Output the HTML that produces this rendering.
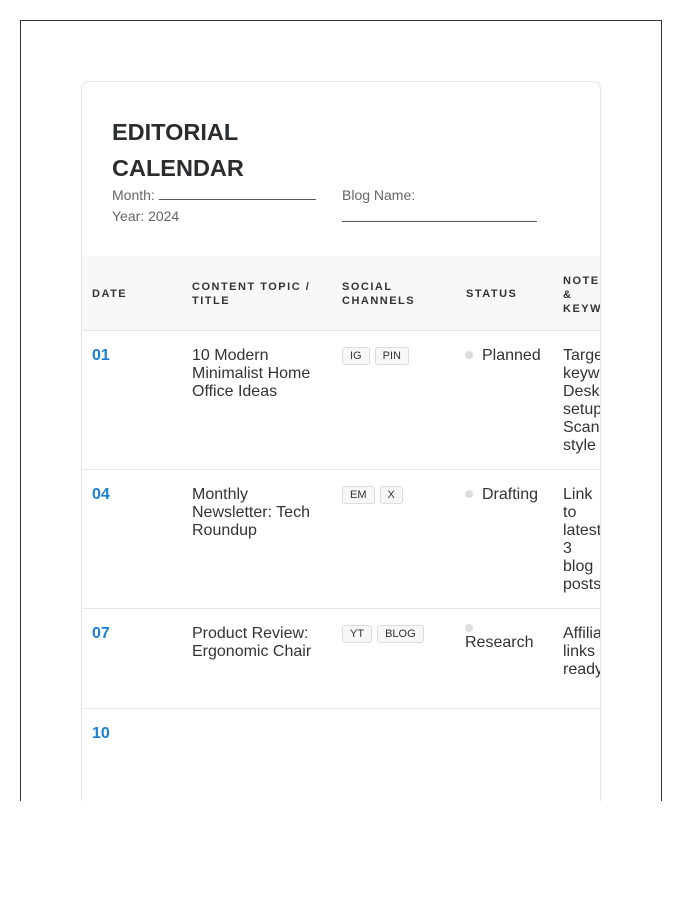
<!DOCTYPE html>
<html><head><meta charset="utf-8"><style>
*{margin:0;padding:0;box-sizing:border-box}
body{width:700px;height:900px;background:#fff;font-family:"Liberation Sans",Arial,sans-serif;position:relative;overflow:hidden;color:#333}
.frame{position:absolute;left:20px;top:20px;width:642px;height:781px;border:1px solid #333;border-bottom:none}
.card{position:absolute;left:81px;top:81px;width:520px;height:720px;border:1px solid #e6e6e6;border-bottom:none;border-radius:8px 8px 0 0;overflow:hidden}
.a{position:absolute;white-space:nowrap}
h1{position:absolute;left:30px;top:32px;font-size:23.5px;font-weight:bold;line-height:36px;color:#2a2d30}
.meta{font-size:14px;color:#666;line-height:20px}
.line{display:inline-block;border-bottom:1px solid #555;vertical-align:baseline}
.head{position:absolute;left:0;top:174px;width:520px;height:75px;background:#f8f8f8;border-bottom:1px solid #e6e6e6}
.th{position:absolute;font-size:11px;font-weight:bold;letter-spacing:1.5px;color:#333;line-height:14px}
.row{position:absolute;left:0;width:520px;border-bottom:1px solid #e6e6e6}
.d{position:absolute;left:10px;top:16px;font-size:16px;font-weight:bold;color:#1a7fd4}
.t{position:absolute;left:110px;top:16px;font-size:16px;line-height:18px;color:#333}
.tags{position:absolute;left:260px;top:16px;display:flex;gap:5px}
.tag{font-size:11px;border:1px solid #ddd;background:#f7f7f7;border-radius:3px;padding:2px 7px;line-height:12px;color:#333}
.st{position:absolute;left:383px;top:16px;font-size:16px;line-height:18px;color:#333}
.dot{display:inline-block;width:8px;height:8px;border-radius:50%;background:#ddd;margin-right:9px;vertical-align:1px}
.n{position:absolute;left:481px;top:16px;font-size:16px;line-height:18px;color:#333}
</style></head><body>
<div class="frame"></div>
<div class="card">
<h1>EDITORIAL<br>CALENDAR</h1>
<div class="a meta" style="left:30px;top:103px">Month: <span class="line" style="width:157px"></span></div>
<div class="a meta" style="left:30px;top:124px">Year: 2024</div>
<div class="a meta" style="left:260px;top:103px">Blog Name:</div>
<div class="a" style="left:260px;top:139px;width:195px;border-bottom:1px solid #555"></div>
<div class="head">
<div class="th" style="left:10px;top:31px">DATE</div>
<div class="th" style="left:110px;top:24px">CONTENT TOPIC /<br>TITLE</div>
<div class="th" style="left:260px;top:24px">SOCIAL<br>CHANNELS</div>
<div class="th" style="left:384px;top:31px">STATUS</div>
<div class="th" style="left:481px;top:18px">NOTES<br>&amp;<br>KEYWORDS</div>
</div>
<div class="row" style="top:249px;height:139px">
<div class="d">01</div><div class="t">10 Modern<br>Minimalist Home<br>Office Ideas</div>
<div class="tags"><span class="tag">IG</span><span class="tag">PIN</span></div>
<div class="st"><span class="dot"></span>Planned</div>
<div class="n">Target<br>keyword:<br>Desk<br>setup<br>Scandi<br>style</div>
</div>
<div class="row" style="top:388px;height:139px">
<div class="d">04</div><div class="t">Monthly<br>Newsletter: Tech<br>Roundup</div>
<div class="tags"><span class="tag">EM</span><span class="tag">X</span></div>
<div class="st"><span class="dot"></span>Drafting</div>
<div class="n">Link<br>to<br>latest<br>3<br>blog<br>posts</div>
</div>
<div class="row" style="top:527px;height:100px">
<div class="d">07</div><div class="t">Product Review:<br>Ergonomic Chair</div>
<div class="tags"><span class="tag">YT</span><span class="tag">BLOG</span></div>
<div class="st" style="top:15px"><span class="dot" style="display:block;margin-bottom:2px"></span>Research</div>
<div class="n">Affiliate<br>links<br>ready</div>
</div>
<div class="row" style="top:627px;height:120px;border-bottom:none">
<div class="d">10</div>
</div>
</div>
</body></html>
